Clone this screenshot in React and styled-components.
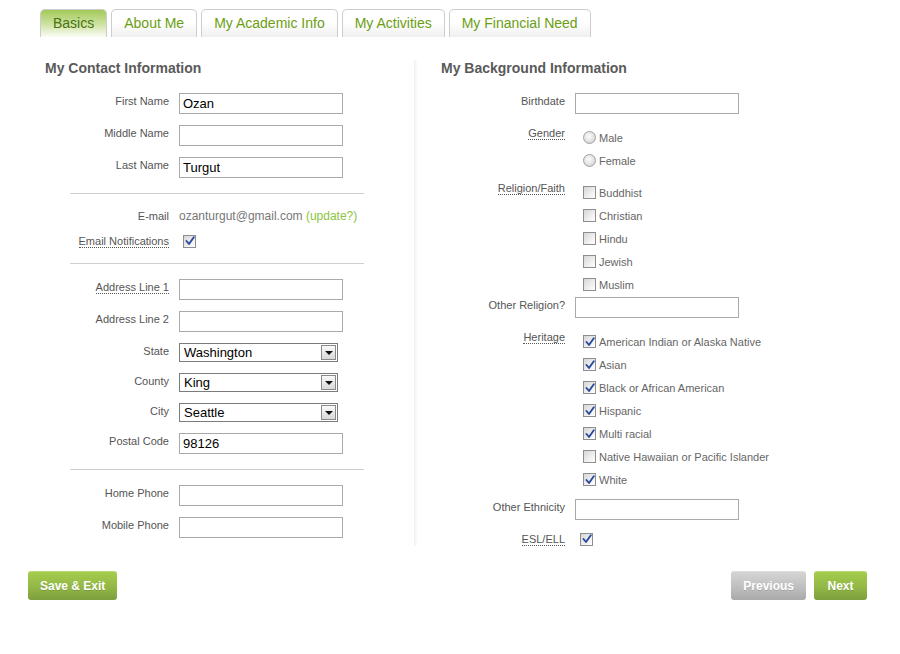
import React from 'react';
import styled, { createGlobalStyle } from 'styled-components';

const Global = createGlobalStyle`
  html, body { margin: 0; padding: 0; background: #fff; }
  body { font-family: "Liberation Sans", Arial, sans-serif; }
`;

const Page = styled.div`
  width: 900px;
  height: 654px;
  padding-top: 9px;
  box-sizing: border-box;
`;

const TabBar = styled.nav`
  display: flex;
  gap: 4px;
  padding-left: 40px;
  height: 28px;
`;

const Tab = styled.div`
  box-sizing: border-box;
  height: 28px;
  padding: 0 12px;
  border: 1px solid #cdcdcd;
  border-bottom: none;
  border-radius: 5px 5px 0 0;
  font-size: 14px;
  line-height: 27px;
  color: ${(p) => (p.$active ? '#48730d' : '#6c9e12')};
  background: ${(p) =>
    p.$active
      ? 'linear-gradient(#a3c957, #cfe3a6 55%, #fbfdf7)'
      : 'linear-gradient(#fff, #fff 45%, #f0f0f0)'};
`;

const Columns = styled.div`
  display: flex;
  margin-top: 23px;
  padding-bottom: 4px;
`;

const LeftCol = styled.section`
  width: 374px;
  margin-left: 40px;
  display: flex;
  flex-direction: column;
`;

const VDivider = styled.div`
  width: 4px;
  background: linear-gradient(to right, #f0f0f0, #f9f9f9 50%, #fff);
`;

const RightCol = styled.section`
  flex: 1;
  display: flex;
  flex-direction: column;
  margin-left: -1px;
`;

const Heading = styled.h2`
  margin: 0 0 17px ${(p) => p.$indent}px;
  font-size: 14px;
  line-height: 16px;
  font-weight: bold;
  color: #5a5a5a;
`;

const Section = styled.div`
  display: flex;
  flex-direction: column;
  gap: 11px;
`;

const Rule = styled.hr`
  margin: 15px 0 15px 30px;
  width: 294px;
  height: 1px;
  border: none;
  background: #cfcfcf;
`;

const Row = styled.div`
  display: grid;
  grid-template-columns: ${(p) => p.$labelW}px auto;
  column-gap: 10px;
  align-items: ${(p) => (p.$center ? 'center' : 'start')};
  margin-top: ${(p) => p.$mt || 0}px;
`;

const Label = styled.div`
  font-size: 11px;
  line-height: 14px;
  color: #555;
  text-align: right;
  padding-top: ${(p) => p.$pt || 0}px;
  white-space: nowrap;
`;

const Dotted = styled.span`
  border-bottom: 1px dotted #555;
`;

const TextInput = styled.input`
  width: 164px;
  height: 21px;
  box-sizing: border-box;
  border: 1px solid #aaa;
  margin: 0;
  padding: 0 3px;
  font: 13px "Liberation Sans", Arial, sans-serif;
  color: #000;
  background: #fff;
  outline: none;
`;

const SelectBox = styled.div`
  width: 159px;
  height: 19px;
  box-sizing: border-box;
  border: 1px solid #7b7b7b;
  display: flex;
  align-items: center;
  justify-content: space-between;
  padding: 0 1px 0 4px;
  font-size: 13px;
  color: #000;
  background: #fff;
`;

const ArrowBtn = styled.span`
  width: 15px;
  height: 15px;
  box-sizing: border-box;
  border: 1px solid #8a8a8a;
  background: linear-gradient(#fafafa, #d8d8d8);
  display: flex;
  align-items: center;
  justify-content: center;
`;

const Triangle = styled.span`
  width: 0;
  height: 0;
  border-left: 4px solid transparent;
  border-right: 4px solid transparent;
  border-top: 4px solid #111;
  margin-top: 1px;
`;

const ValueText = styled.div`
  font-size: 12px;
  line-height: 14px;
  color: #777;
  white-space: nowrap;
`;

const UpdateLink = styled.span`
  color: #8cc43c;
`;

const Options = styled.div`
  display: flex;
  flex-direction: column;
  padding-left: 8px;
`;

const Option = styled.div`
  display: flex;
  align-items: center;
  gap: 3px;
  height: 23px;
  font-size: 11px;
  color: #666;
  white-space: nowrap;
`;

const Box = styled.span`
  flex: none;
  width: 13px;
  height: 13px;
  box-sizing: border-box;
  border: 1px solid #8e8e8e;
  background: linear-gradient(135deg, #d6d6d6, #f4f4f4 70%, #fff);
  display: inline-flex;
  align-items: center;
  justify-content: center;
  margin-left: ${(p) => p.$ml || 0}px;
`;

const Radio = styled.span`
  flex: none;
  width: 13px;
  height: 13px;
  box-sizing: border-box;
  border-radius: 50%;
  border: 1px solid #a2a2a2;
  background: radial-gradient(circle at 45% 40%, #fdfdfd, #e2e2e2 55%, #c4c4c4);
`;

const CheckRow = styled.div`
  height: 14px;
  display: flex;
  align-items: center;
`;

const Footer = styled.div`
  display: flex;
  justify-content: space-between;
  align-items: center;
  padding: 0 33px 0 28px;
  margin-top: 21px;
`;

const ButtonGroup = styled.div`
  display: flex;
  gap: 8px;
`;

const Button = styled.button`
  height: 29px;
  min-width: ${(p) => p.$minW || 0}px;
  padding: 0 12px;
  border: none;
  border-radius: 3px;
  font: bold 12px "Liberation Sans", Arial, sans-serif;
  color: #fff;
  text-shadow: 0 1px 0 rgba(0, 0, 0, 0.15);
  background: ${(p) =>
    p.$gray
      ? 'linear-gradient(#d6d6d6, #bdbdbd 60%, #a9a9a9)'
      : 'linear-gradient(#a6ce4d, #93b846 55%, #7c9e3f)'};
  box-shadow: inset 0 1px 0 rgba(255, 255, 255, 0.25);
  cursor: pointer;
`;

function Check({ checked, ml }) {
  return (
    <Box $ml={ml}>
      {checked && (
        <svg width="10" height="10" viewBox="0 0 10 10">
          <path d="M1.5 5 L4 8 L8.8 1.2" fill="none" stroke="#2a4a9c" strokeWidth="1.9" strokeLinecap="round" strokeLinejoin="round" />
        </svg>
      )}
    </Box>
  );
}

function Select({ value }) {
  return (
    <SelectBox>
      <span>{value}</span>
      <ArrowBtn>
        <Triangle />
      </ArrowBtn>
    </SelectBox>
  );
}

const L = 129;
const R = 148;

function Field({ label, value, labelW = L, mt, dotted }) {
  return (
    <Row $labelW={labelW} $mt={mt}>
      <Label $pt={1}>{dotted ? <Dotted>{label}</Dotted> : label}</Label>
      <TextInput defaultValue={value || ''} />
    </Row>
  );
}

function SelectField({ label, value }) {
  return (
    <Row $labelW={L}>
      <Label $pt={1}>{label}</Label>
      <Select value={value} />
    </Row>
  );
}

function Group({ label, mt, items, radio }) {
  return (
    <Row $labelW={R} $mt={mt}>
      <Label>
        <Dotted>{label}</Dotted>
      </Label>
      <Options>
        {items.map(([text, checked]) => (
          <Option key={text}>
            {radio ? <Radio /> : <Check checked={checked} />}
            <span>{text}</span>
          </Option>
        ))}
      </Options>
    </Row>
  );
}

export default function App() {
  return (
    <Page>
      <Global />
      <TabBar>
        <Tab $active>Basics</Tab>
        <Tab>About Me</Tab>
        <Tab>My Academic Info</Tab>
        <Tab>My Activities</Tab>
        <Tab>My Financial Need</Tab>
      </TabBar>

      <Columns>
        <LeftCol>
          <Heading $indent={5}>My Contact Information</Heading>
          <Section>
            <Field label="First Name" value="Ozan" />
            <Field label="Middle Name" />
            <Field label="Last Name" value="Turgut" />
          </Section>
          <Rule />
          <Section>
            <Row $labelW={L} $center>
              <Label>E-mail</Label>
              <ValueText>
                ozanturgut@gmail.com <UpdateLink>(update?)</UpdateLink>
              </ValueText>
            </Row>
            <Row $labelW={L} $center>
              <Label>
                <Dotted>Email Notifications</Dotted>
              </Label>
              <CheckRow>
                <Check checked ml={4} />
              </CheckRow>
            </Row>
          </Section>
          <Rule />
          <Section>
            <Field label="Address Line 1" dotted />
            <Field label="Address Line 2" />
            <SelectField label="State" value="Washington" />
            <SelectField label="County" value="King" />
            <SelectField label="City" value="Seattle" />
            <Field label="Postal Code" value="98126" />
          </Section>
          <Rule />
          <Section>
            <Field label="Home Phone" />
            <Field label="Mobile Phone" />
          </Section>
        </LeftCol>

        <VDivider />

        <RightCol>
          <Heading $indent={24}>My Background Information</Heading>
          <Field label="Birthdate" labelW={R} />
          <Group label="Gender" mt={12} radio items={[['Male'], ['Female']]} />
          <Group
            label="Religion/Faith"
            mt={9}
            items={[['Buddhist'], ['Christian'], ['Hindu'], ['Jewish'], ['Muslim']]}
          />
          <Field label="Other Religion?" labelW={R} mt={1} />
          <Group
            label="Heritage"
            mt={12}
            items={[
              ['American Indian or Alaska Native', true],
              ['Asian', true],
              ['Black or African American', true],
              ['Hispanic', true],
              ['Multi racial', true],
              ['Native Hawaiian or Pacific Islander', false],
              ['White', true],
            ]}
          />
          <Field label="Other Ethnicity" labelW={R} mt={8} />
          <Row $labelW={R} $mt={12} $center>
            <Label>
              <Dotted>ESL/ELL</Dotted>
            </Label>
            <CheckRow>
              <Check checked ml={5} />
            </CheckRow>
          </Row>
        </RightCol>
      </Columns>

      <Footer>
        <Button>Save &amp; Exit</Button>
        <ButtonGroup>
          <Button $gray>Previous</Button>
          <Button $minW={53}>Next</Button>
        </ButtonGroup>
      </Footer>
    </Page>
  );
}
